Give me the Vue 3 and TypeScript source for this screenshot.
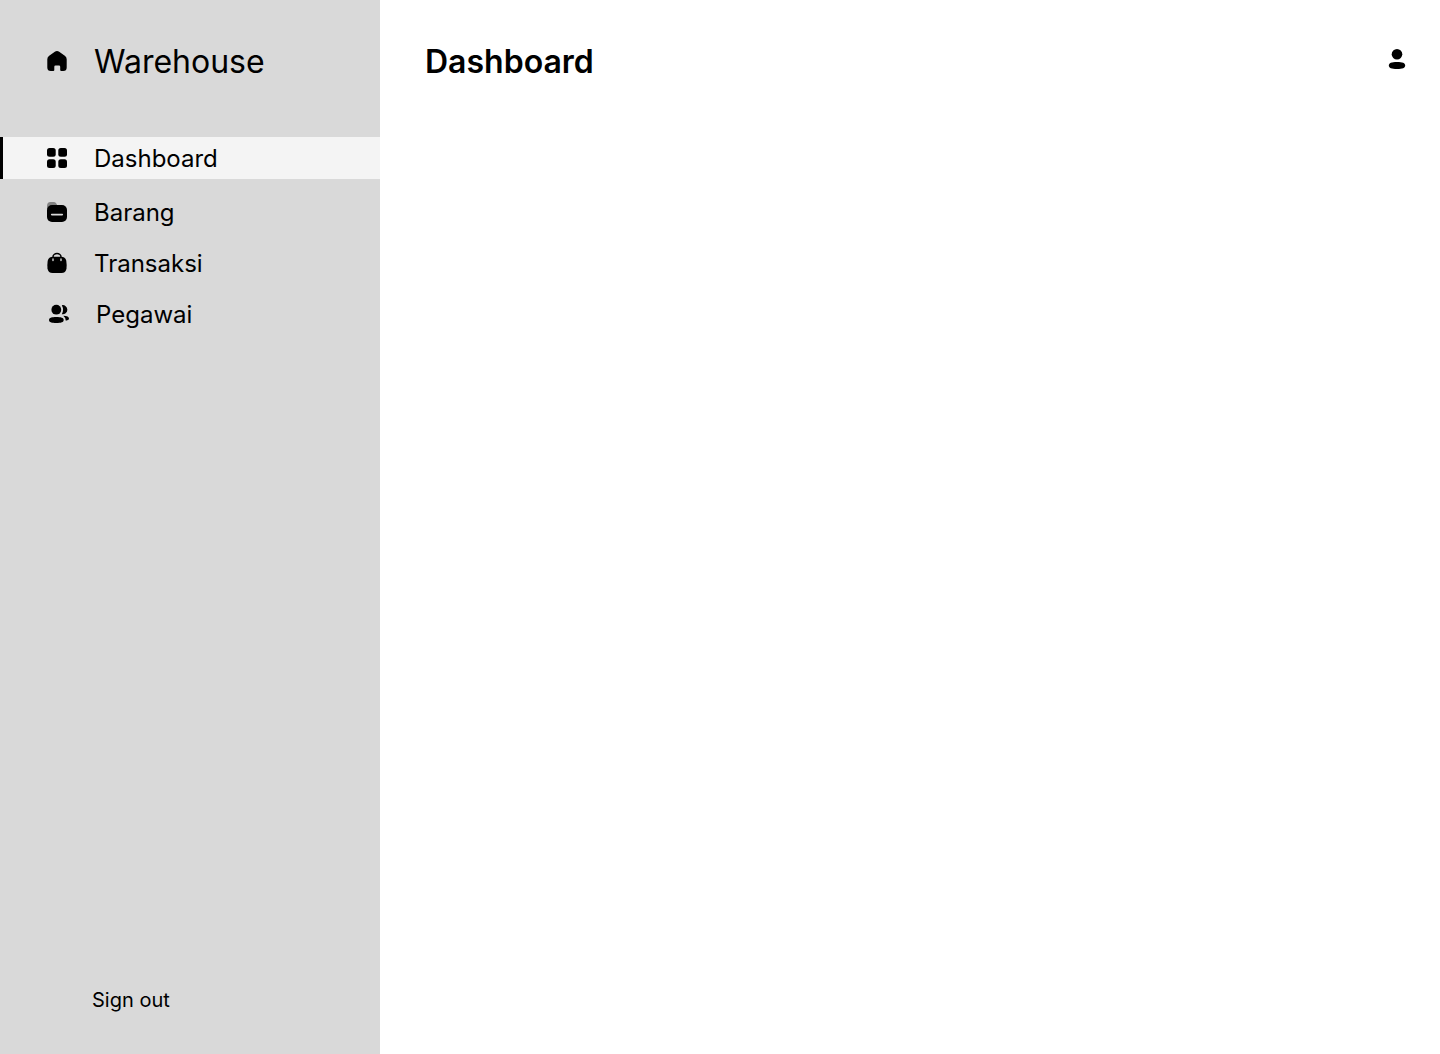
<script setup lang="ts">
import { ref } from 'vue'

type IconName = 'grid' | 'folder' | 'bag' | 'people'

interface MenuItem {
  label: string
  icon: IconName
}

const items: MenuItem[] = [
  { label: 'Dashboard', icon: 'grid' },
  { label: 'Barang', icon: 'folder' },
  { label: 'Transaksi', icon: 'bag' },
  { label: 'Pegawai', icon: 'people' },
]

const current = ref('Dashboard')
</script>

<template>
  <div class="layout">
    <aside class="sidebar">
      <a class="brand" href="#">
        <svg class="icon" viewBox="0 0 24 24" aria-hidden="true">
          <path d="M9.800 2.700Q12 1.300 14.200 2.700L19.800 6.800Q21.700 8.200 21.700 10.200V18.500Q21.700 22 18.200 22H16.200Q15.200 22 15.200 21V17.700Q15.200 16.500 14 16.500H10.500Q9.300 16.500 9.300 17.700V21Q9.300 22 8.300 22H5.800Q2.300 22 2.300 18.500V10.200Q2.300 8.200 4.200 6.800Z" />
        </svg>
        <span>Warehouse</span>
      </a>

      <nav class="menu" aria-label="Menu">
        <a
          v-for="item in items"
          :key="item.label"
          href="#"
          class="item"
          :class="[item.icon, { active: item.label === current }]"
          :aria-current="item.label === current ? 'page' : undefined"
          @click.prevent="current = item.label"
        >
          <svg class="icon" viewBox="0 0 24 24" aria-hidden="true">
            <template v-if="item.icon === 'grid'">
              <rect x="2" y="2" width="8.700" height="8.700" rx="2.500" />
              <rect x="13.300" y="2" width="8.700" height="8.700" rx="2.500" />
              <rect x="2" y="13.300" width="8.700" height="8.700" rx="2.500" />
              <rect x="13.300" y="13.300" width="8.700" height="8.700" rx="2.500" />
            </template>
            <template v-else-if="item.icon === 'folder'">
              <path opacity="0.4" d="M2 9V6Q2 2 5.500 2H8.500Q10.300 2 11.300 3.400L13 6.500Z" />
              <rect x="2" y="5" width="20" height="17" rx="5" />
              <path d="M6.700 14.600H17.300" stroke="#d9d9d9" stroke-width="1.600" stroke-linecap="round" />
            </template>
            <template v-else-if="item.icon === 'bag'">
              <path d="M8 8V6A4 3.500 0 0 1 16 6V8" fill="none" stroke="currentColor" stroke-width="1.500" />
              <path d="M8 5.700H16Q20.400 5.700 21.300 9.800Q21.900 14 21.500 17.500Q20.700 22 16.500 22H7.500Q3.300 22 2.500 17.500Q2.100 14 2.700 9.800Q3.600 5.700 8 5.700Z" />
              <path d="M8 8V9.500M16 8V9.500" stroke="#d9d9d9" stroke-width="1.400" stroke-linecap="round" />
            </template>
            <template v-else>
              <circle cx="9.300" cy="7.700" r="4.900" />
              <path d="M9.300 15C14 15 16.700 15.800 16.700 18S14 21 9.300 21S2 20.200 2 18S4.600 15 9.300 15Z" />
              <path d="M14.800 3.200A4.600 4.600 0 1 1 14.800 12.200Q17.300 7.800 14.800 3.200Z" />
              <path d="M16.300 13.700Q22 13.700 22 16.600Q22 18.300 18.800 18.700Q18.900 15.800 16.300 13.700Z" />
            </template>
          </svg>
          <span>{{ item.label }}</span>
        </a>
      </nav>

      <button class="sign-out" type="button">Sign out</button>
    </aside>

    <main class="content">
      <header class="topbar">
        <h1>{{ current }}</h1>
        <button class="profile" type="button" aria-label="Profile">
          <svg class="icon" viewBox="0 0 24 24" aria-hidden="true">
            <circle cx="12" cy="7.300" r="5.300" />
            <path d="M12 15C17.500 15 20.200 16 20.200 18.500S17.500 22 12 22S3.800 21 3.800 18.500S6.500 15 12 15Z" />
          </svg>
        </button>
      </header>
    </main>
  </div>
</template>

<style>
body {
  margin: 0;
}
</style>

<style scoped>
.layout {
  display: flex;
  min-height: 100vh;
  background: #fff;
  color: #000;
  font-family: Inter, 'Liberation Sans', sans-serif;
}

.sidebar {
  box-sizing: border-box;
  flex: 0 0 380px;
  display: flex;
  flex-direction: column;
  padding: 41px 0 38px;
  background: #d9d9d9;
}

.icon {
  display: block;
  flex: none;
  width: 24px;
  height: 24px;
  fill: currentColor;
}

.brand,
.item {
  display: flex;
  align-items: center;
  gap: 25px;
  color: inherit;
  text-decoration: none;
}

.brand span,
.item span,
h1 {
  padding-top: 2px;
}

.brand {
  padding-left: 45px;
  font-size: 32px;
  line-height: 38px;
}

.menu {
  display: flex;
  flex-direction: column;
  gap: 9px;
  margin-top: 56px;
}

.item {
  padding-left: 42px;
  border-left: 3px solid transparent;
  font-size: 24px;
  line-height: 40px;
}

.item.grid {
  margin-bottom: 3px;
}

.item.people {
  padding-left: 44px;
}

.item.active {
  border-left-color: #000;
  background: #f4f4f4;
}

button {
  padding: 0;
  border: 0;
  background: none;
  color: inherit;
  font-family: inherit;
  cursor: pointer;
}

.sign-out {
  align-self: flex-start;
  margin-top: auto;
  margin-left: 92px;
  font-size: 20px;
  line-height: 32px;
}

.content {
  flex: 1;
  min-width: 0;
}

.topbar {
  display: flex;
  align-items: center;
  justify-content: space-between;
  padding: 41px 31px 0 45px;
}

h1 {
  margin: 0;
  font-size: 32px;
  font-weight: 600;
  line-height: 38px;
}

.profile {
  margin-bottom: 4px;
}
</style>
